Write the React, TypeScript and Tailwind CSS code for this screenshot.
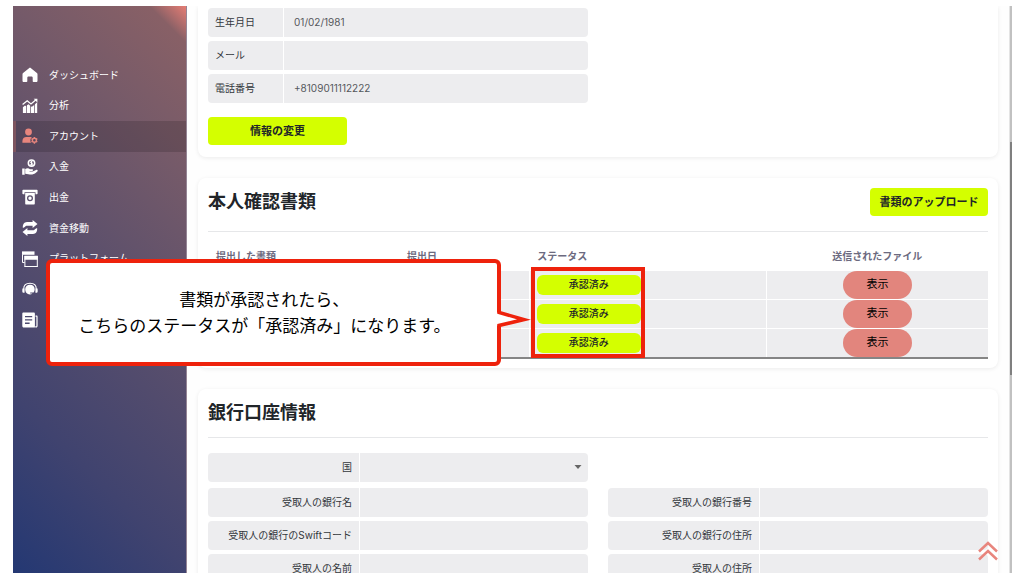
import React, { ReactNode } from 'react'

const Icon = ({ children }: { children: ReactNode }) => (
  <svg viewBox="0 0 16 16" className="w-4 h-4 shrink-0" fill="currentColor" aria-hidden="true">
    {children}
  </svg>
)

const icons = {
  home: <path d="M8 .8c.4 0 .7.1 1 .4l5.900 4.900c.4.3.6.8.6 1.300v6.400c0 .8-.5 1.200-1.200 1.200h-2.800c-.5 0-.8-.3-.8-.8v-3.400c0-.9-.6-1.400-1.400-1.400H6.700c-.8 0-1.400.5-1.400 1.400v3.400c0 .5-.3.8-.8.8H1.700c-.7 0-1.200-.4-1.200-1.200V7.400c0-.5.2-1 .6-1.300L7 1.200c.3-.3.6-.4 1-.4z" />,
  chart: (
    <>
      <path d="M.9 9.300 3 7.500l1.200.8V15H.9zM4.900 7.200l1.700-.9 1.600 1.500V15H4.900zM8.900 8.700l1.400-.2 1.900-1.500v8H8.900zM12.900 6.200l2.300-1.900V15h-2.300z" />
      <path d="M.6 6.600 5.200 2.800 9 6l5-4.200" fill="none" stroke="currentColor" strokeWidth="1.300" />
      <path d="M11.700.8h3.700v3.600z" />
    </>
  ),
  account: (
    <>
      <circle cx="6.500" cy="4" r="3.400" />
      <path d="M.4 14.700v-1.500C.4 10.600 2 9 4.500 9h3.900c.6 0 1 .1 1.400.3A4.600 4.600 0 0 0 9 14.700z" />
      <circle cx="12.400" cy="12.300" r="2" fill="none" stroke="currentColor" strokeWidth="1.400" />
      <path d="M12.400 9v1.200M12.400 14.400v1.300M9.500 10.700l1.100.6M14.200 13.300l1.100.6M9.500 13.900l1.100-.6M14.200 11.300l1.100-.6" stroke="currentColor" strokeWidth="1.400" />
    </>
  ),
  deposit: (
    <>
      <circle cx="9.500" cy="4.100" r="3.200" fill="none" stroke="currentColor" strokeWidth="1.500" />
      <path d="M10.700 3c-.7-.7-2.300-.6-2.300.3 0 1.200 2.400.6 2.400 1.800 0 1-1.800 1-2.500.2M9.500 1.900v4.600" fill="none" stroke="currentColor" strokeWidth="1" />
      <path d="M.2 9.500h2.500v6.200H.2zM3.200 9.900c1.800-1.100 3.600-.9 4.800.3h2.200c1.200 0 1.300 1.700 0 1.800H7.500v.4h3.200l3.300-1.500c1.400-.5 2.200.8 1.300 1.700-1.500 1.500-3 2.700-5 2.900-2.200.2-4.300-.2-7.100-.7z" />
    </>
  ),
  withdraw: (
    <>
      <path d="M1.200.8h13.600c.5 0 .8.4.8.8v2.800c0 .5-.3.8-.8.8h-1.300V3.300h-11v1.900H1.200c-.5 0-.8-.3-.8-.8V1.600c0-.4.3-.8.8-.8z" />
      <path fillRule="evenodd" d="M3.200 4h9.600v10.500c0 .6-.4 1-1 1H4.200c-.6 0-1-.4-1-1zm4.800 2.200a3 3 0 1 0 0 6 3 3 0 0 0 0-6zm0 1.300a1.700 1.700 0 1 1 0 3.400 1.700 1.700 0 0 1 0-3.400z" />
    </>
  ),
  transfer: (
    <path d="M10.600 0 15.500 4.100 10.600 8.100V5.700H5.200c-1.100 0-1.800.4-2.400 1.300L.9 7.900C.4 4.600 2 2 5 1.900h5.600zM5.400 16 .5 11.900l4.900-4v2.400h5.400c1.100 0 1.800-.4 2.400-1.300l1.900-.9c.5 3.300-1.100 5.900-4.100 6H5.400z" />
  ),
  platform: (
    <>
      <path d="M0 .4h12.500v3.400H0z" />
      <path d="M.5 3.500v8h2.200M2.900 5v10.500h12.400V5" fill="none" stroke="currentColor" strokeWidth="1" />
      <path d="M2.400 4.700h13.400v4H2.400zM2.400 15h13.400v.9H2.400z" />
    </>
  ),
  support: (
    <>
      <path d="M1.700 8C1.700 4.200 4.500 2.200 8 2.200S14.300 4.200 14.300 8" fill="none" stroke="currentColor" strokeWidth="1.100" />
      <path d="M.4 7.600h2.200v4.200H1.300C.7 11.800.3 11 .3 10zM15.600 7.600h-2.200v4.200h1.300c.6 0 1-.8 1-1.800z" />
      <path d="M8 3.700c3 0 4.700 1.900 4.700 4.600 0 1.300-.4 2.300-1.100 3.200H8.200v1h2.300c-.8.7-1.700 1-2.600 1-2.800 0-4.700-2.300-4.700-5.200 0-2.700 1.900-4.600 4.800-4.600z" />
    </>
  ),
  news: (
    <>
      <path fillRule="evenodd" d="M1.500.6h10.200c.7 0 1.200.5 1.200 1.200v13.600H1.800c-.9 0-1.500-.6-1.500-1.500V1.800C.3 1.100.8.6 1.500.6zM3 4v1.300h7.200V4zm0 3.300v1.300h7.200V7.300zm0 3.300v1.300h4.600v-1.300z" />
      <path d="M13.500 3.600h1c.7 0 1.100.4 1.100 1.100v9.200c0 .9-.6 1.500-1.400 1.500h-1v-1.200h1.200V4.800h-.9z" />
    </>
  ),
}

const menu = [
  { id: 'dashboard', name: 'ダッシュボード', icon: icons.home },
  { id: 'chart', name: '分析', icon: icons.chart },
  { id: 'account', name: 'アカウント', icon: icons.account, active: true },
  { id: 'deposit', name: '入金', icon: icons.deposit },
  { id: 'withdraw', name: '出金', icon: icons.withdraw },
  { id: 'transfer', name: '資金移動', icon: icons.transfer },
  { id: 'platform', name: 'プラットフォーム', icon: icons.platform },
  { id: 'support', name: '', icon: icons.support },
  { id: 'news', name: '', icon: icons.news },
]

const Sidebar = () => {
  return (
    <nav className="w-[174px] shrink-0 pt-[54px] border-r border-[#958595] bg-[linear-gradient(225deg,#e67d74_0%,#886066_5%,#755a69_23%,#5a4f6c_48%,#40436f_76%,#243873_100%)]">
      {/* menu */}
      <ul className="grid grid-rows-9 h-[275px]">
        {menu.map((item) => (
          <li key={item.id}>
            <a
              href="#"
              aria-label={item.name || item.id}
              className={
                item.active
                  ? 'flex items-center h-full gap-[11px] pl-1.5 border-l-3 border-[#7d545f] bg-black/15 text-white text-[10px]'
                  : 'flex items-center h-full gap-[11px] pl-[9px] text-white text-[10px]'
              }
            >
              <span className={item.active ? 'text-[#e8857d]' : 'text-white'}>
                <Icon>{item.icon}</Icon>
              </span>
              {item.name}
            </a>
          </li>
        ))}
      </ul>
    </nav>
  )
}

const Card = ({ children, className }: { children: ReactNode; className: string }) => (
  <section className={`bg-white px-2.5 shadow-[0_1px_4px_rgba(0,0,0,0.08)] ${className}`}>{children}</section>
)

const InfoField = ({ id, label, value }: { id: string; label: string; value: string }) => (
  <div className="flex h-[29px] rounded-sm overflow-hidden bg-[#ededef] text-[#33373c]">
    <label htmlFor={id} className="w-1/5 flex items-center pl-[7px] border-r border-white text-[10px]">
      {label}
    </label>
    <input id={id} className="flex-1 min-w-0 px-2.5 text-[10px] text-[#55585c]" type="text" value={value} readOnly />
  </div>
)

const BankField = ({ id, label, select }: { id: string; label: string; select?: boolean }) => (
  <div className="relative flex h-[29px] rounded-sm overflow-hidden bg-[#ededef] text-[#33373c]">
    <label htmlFor={id} className="w-2/5 flex items-center justify-end pr-[7px] border-r border-white text-[10px]">
      {label}
    </label>
    {select ? (
      <>
        <select id={id} className="flex-1 min-w-0 appearance-none px-2 text-[10px]" />
        <svg viewBox="0 0 8 4" className="absolute right-1.5 top-3 w-2 h-1 pointer-events-none" fill="#666">
          <path d="M.5 0h7L4 4z" />
        </svg>
      </>
    ) : (
      <input id={id} className="flex-1 min-w-0 px-2 text-[10px]" type="text" />
    )}
  </div>
)

const Callout = () => (
  <>
    {/* frame round the status column */}
    <div className="absolute z-10 left-px -top-1 w-[114px] h-[91px] border-4 border-[#ee220c] pointer-events-none" />
    <div className="absolute z-10 right-full mr-[29px] -top-3 w-[455px] h-[107px] pr-[18px] flex items-center justify-center rounded-md border-4 border-[#ee220c] bg-white text-black">
      <p className="text-[17px] leading-[26px] text-center whitespace-nowrap">
        書類が承認されたら、
        <br />
        こちらのステータスが「承認済み」になります。
      </p>
      <svg viewBox="0 0 36 20" className="absolute left-full top-[46px] w-9 h-5">
        <path d="M0 0v3.500h2L28 10.500 2 16.500H0V20" fill="#fff" />
        <path d="M2 0v3.500L27 10.500 2 16.500V20" fill="none" stroke="#ee220c" strokeWidth="3.500" />
      </svg>
    </div>
  </>
)

const Documents = () => {
  return (
    <Card className="rounded-lg pt-2.5 pb-[9px]">
      <div className="flex items-start justify-between pb-[15px] border-b border-[#e6e7e9]">
        <h2 className="text-lg leading-7 font-bold text-[#212529]">本人確認書類</h2>
        <button className="h-7 w-[118px] rounded-sm bg-[#d4ff00] text-[11px] font-bold text-[#212529]">書類のアップロード</button>
      </div>
      <table className="w-full table-fixed border-b-2 border-[#858585] text-[10px]">
        <thead>
          <tr className="h-[39px] text-left text-[#6c6a80]">
            <th className="w-[24.5%] pl-2 pt-2.5">提出した書類</th>
            <th className="w-[16.7%] pl-2 pt-2.5">提出日</th>
            <th className="w-[30.4%] pl-2 pt-2.5">ステータス</th>
            <th className="text-center pt-2.5">送信されたファイル</th>
          </tr>
        </thead>
        <tbody>
          {[0, 1, 2].map((row) => (
            <tr key={row} className="bg-[#ededef] border-t border-white first:border-t-0">
              <td className="border-r border-white" />
              <td className="border-r border-white" />
              <td className="relative border-r border-white pl-[7px]">
                <span className="block w-[104px] h-5 rounded-md bg-[#d4ff00] text-center text-[10px] leading-[18px] font-medium text-[#212529]">
                  承認済み
                </span>
                {row === 0 && <Callout />}
              </td>
              <td className="text-center">
                <button className="block mx-auto w-[69px] h-7 pb-0.5 rounded-full bg-[#e2857d] text-[11px] text-black">表示</button>
              </td>
            </tr>
          ))}
        </tbody>
      </table>
    </Card>
  )
}

const BankInfo = () => {
  return (
    <Card className="rounded-t-lg pb-2.5">
      <h2 className="text-lg leading-[48px] font-bold text-[#212529] border-b border-[#e6e7e9]">銀行口座情報</h2>
      <div className="grid grid-cols-2 gap-x-5 mt-[15px]">
        <BankField id="country" label="国" select />
      </div>
      <div className="grid grid-cols-2 gap-x-5 gap-y-1 mt-1.5">
        <BankField id="bankName" label="受取人の銀行名" />
        <BankField id="bankNumber" label="受取人の銀行番号" />
        <BankField id="swift" label="受取人の銀行のSwiftコード" />
        <BankField id="bankAddress" label="受取人の銀行の住所" />
        <BankField id="name" label="受取人の名前" />
        <BankField id="address" label="受取人の住所" />
      </div>
    </Card>
  )
}

const App = () => {
  return (
    <div className="h-screen bg-white pt-1.5 pb-[7px] pl-[13px] pr-3.5 font-['Inter','Noto_Sans_CJK_JP',sans-serif]">
      <div className="relative flex h-full overflow-hidden">
        <Sidebar />
        <main className="flex-1 min-w-0 px-[11px] flex flex-col gap-[21px] bg-[#fefefe]">
          <Card className="rounded-b-lg pt-0.5 pb-3">
            <div className="grid grid-cols-2 gap-x-5 gap-y-1">
              <div className="flex flex-col gap-1">
                <InfoField id="birthday" label="生年月日" value="01/02/1981" />
                <InfoField id="mail" label="メール" value="" />
                <InfoField id="phone" label="電話番号" value="+8109011112222" />
              </div>
            </div>
            <button className="mt-3.5 h-7 w-[139px] rounded-sm bg-[#d4ff00] text-[11px] font-bold text-[#212529] block">情報の変更</button>
          </Card>
          <Documents />
          <BankInfo />
        </main>
        {/* scroll bar */}
        <div className="w-[3px] shrink-0 pt-[136px] border-l border-[#e4e4e4] bg-[#c1c1c1]">
          <div className="h-[233px] bg-[#7f7f7f]" />
        </div>
        {/* back to top */}
        <a href="#" aria-label="トップへ" className="absolute right-3.5 bottom-3 text-[#e8857d]">
          <svg viewBox="0 0 20 20" className="w-5 h-5" fill="none" stroke="currentColor" strokeWidth="2.500">
            <path d="m1 10.500 9-8.500 9 8.500M1 18.500 10 10l9 8.500" />
          </svg>
        </a>
      </div>
    </div>
  )
}

export default App
